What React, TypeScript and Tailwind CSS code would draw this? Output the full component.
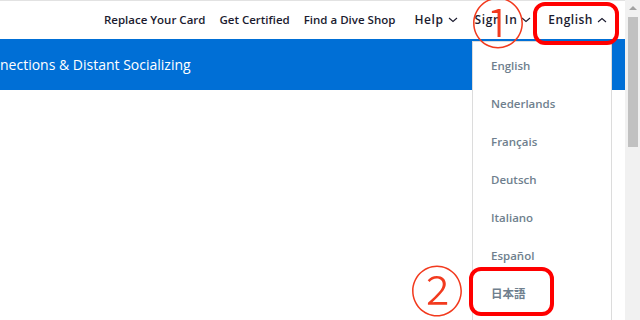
import React from "react";

const navLinks = ["Replace Your Card", "Get Certified", "Find a Dive Shop"];
const languages = ["English", "Nederlands", "Français", "Deutsch", "Italiano", "Español", "日本語"];

function Chevron({ up = false }: { up?: boolean }) {
  return (
    <svg width="10" height="6" viewBox="0 0 10 6" className="ml-[4px]">
      <polyline
        points={up ? "1,5 5,1.5 9,5" : "1,1 5,4.5 9,1"}
        fill="none"
        stroke="#1b1b2f"
        strokeWidth="1.1"
      />
    </svg>
  );
}

export default function App() {
  return (
    <div className="flex h-[320px] w-[640px] overflow-hidden bg-white font-['Open_Sans',sans-serif]">
      <div className="relative flex-1">
        <header className="flex h-[39px] items-center justify-end border-t border-[#e2e2e2] pr-[18px] font-semibold text-[#1b1b2f]">
          {navLinks.map((l) => (
            <span key={l} className="ml-[14px] text-[11.5px]">
              {l}
            </span>
          ))}
          <span className="ml-[19px] flex items-center text-[12px] tracking-[0.6px]">
            Help
            <Chevron />
          </span>
          <span className="ml-[17px] flex items-center text-[12px] tracking-[0.6px]">
            Sign In
            <Chevron />
          </span>
          <span className="ml-[17px] flex items-center text-[12px] tracking-[0.5px]">
            English
            <Chevron up />
          </span>
        </header>
        <div className="flex h-[51px] items-center bg-[#006fd6] text-[14px] font-medium text-white">
          <span>nections &amp; Distant Socializing</span>
        </div>

        <div className="absolute left-[472px] top-[41px] h-[290px] w-[140px] border border-[#dcdcdc] bg-white pt-[5px]">
          {languages.map((lang) => (
            <div
              key={lang}
              className="flex h-[38px] items-center pl-[18px] text-[11.5px] font-semibold text-[#6f7f8e] font-['Open_Sans','Noto_Sans_CJK_JP',sans-serif]"
            >
              {lang}
            </div>
          ))}
        </div>

        <span className="absolute left-[471px] top-[-6px] text-[54px] leading-none text-[#f23a1e] font-['Noto_Sans_CJK_JP',sans-serif] font-light">
          ①
        </span>
        <span className="absolute left-[410px] top-[262px] text-[54px] leading-none text-[#f23a1e] font-['Noto_Sans_CJK_JP',sans-serif] font-light">
          ②
        </span>
        <div className="absolute left-[533px] top-[2px] h-[43px] w-[86px] rounded-[12px] border-4 border-[#ff0000]" />
        <div className="absolute left-[469px] top-[267px] h-[49px] w-[85px] rounded-[12px] border-4 border-[#ff0000]" />
      </div>

      <div className="flex w-[15px] flex-col items-center bg-[#f1f1f1]">
        <div className="mt-[6px] h-0 w-0 border-x-[4px] border-b-[4px] border-x-transparent border-b-[#a3a3a3]" />
        <div className="mt-[7px] h-[130px] w-[10px] bg-[#c1c1c1]" />
      </div>
    </div>
  );
}
